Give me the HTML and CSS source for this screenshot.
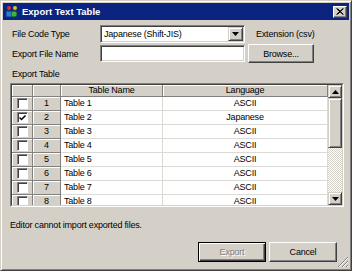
FILE: index.html
```html
<!DOCTYPE html>
<html lang="en">
<head>
    <meta charset="UTF-8">
    <title>Export Text Table</title>
    <link rel="stylesheet" href="styles.css">
</head>
<body>

    <div class="window">
        <div class="titlebar">
            <svg class="app-icon" width="14" height="14" viewBox="0 0 14 14">
                <rect x="1" y="6" width="6" height="6" fill="#2a7fd4" stroke="#0a3a7a" stroke-width="1"/>
                <circle cx="9" cy="9" r="3" fill="#3cb043" stroke="#1d6b22" stroke-width="1"/>
                <circle cx="4" cy="3" r="2" fill="#d83030"/>
                <circle cx="10" cy="3" r="2" fill="#e0c020"/>
                <path d="M4 5 L4 7 M10 5 L9 7" stroke="#444" stroke-width="1"/>
            </svg>
            <span class="title">Export Text Table</span>
            <span class="close-btn">
                <svg width="8" height="7" viewBox="0 0 8 7">
                    <path d="M0.5 0.5 L7 6.5 M1.5 0.5 L7.5 6.5 M7 0.5 L0.5 6.5 M7.5 0.5 L1.5 6.5" stroke="#000" stroke-width="1"/>
                </svg>
            </span>
        </div>

        <div class="body">
            <div class="form-row">
                <span class="field-label">File Code Type</span>
                <div class="combo">
                    <span class="combo-text">Japanese (Shift-JIS)</span>
                    <span class="combo-btn">
                        <svg width="7" height="4" viewBox="0 0 7 4"><path d="M0 0 H7 L3.5 4 Z" fill="#000"/></svg>
                    </span>
                </div>
                <span class="ext">Extension (csv)</span>
            </div>

            <div class="form-row row-file">
                <span class="field-label">Export File Name</span>
                <div class="textbox"></div>
                <button class="btn browse">Browse...</button>
            </div>

            <div class="section-label">Export Table</div>

            <div class="table">
                <div class="table-inner">
                    <div class="grid">
                        <div class="hcell"></div>
                        <div class="hcell"></div>
                        <div class="hcell">Table Name</div>
                        <div class="hcell">Language</div>

                        <div class="hcell"><span class="chk"></span></div>
                        <div class="hcell">1</div>
                        <div class="cell name">Table 1</div>
                        <div class="cell">ASCII</div>

                        <div class="hcell"><span class="chk"><svg width="7" height="6" viewBox="0 0 7 6"><path d="M0.5 2.5 L2.5 4.5 L6.5 0.5" stroke="#000" stroke-width="1.5" fill="none"/></svg></span></div>
                        <div class="hcell">2</div>
                        <div class="cell name">Table 2</div>
                        <div class="cell">Japanese</div>

                        <div class="hcell"><span class="chk"></span></div>
                        <div class="hcell">3</div>
                        <div class="cell name">Table 3</div>
                        <div class="cell">ASCII</div>

                        <div class="hcell"><span class="chk"></span></div>
                        <div class="hcell">4</div>
                        <div class="cell name">Table 4</div>
                        <div class="cell">ASCII</div>

                        <div class="hcell"><span class="chk"></span></div>
                        <div class="hcell">5</div>
                        <div class="cell name">Table 5</div>
                        <div class="cell">ASCII</div>

                        <div class="hcell"><span class="chk"></span></div>
                        <div class="hcell">6</div>
                        <div class="cell name">Table 6</div>
                        <div class="cell">ASCII</div>

                        <div class="hcell"><span class="chk"></span></div>
                        <div class="hcell">7</div>
                        <div class="cell name">Table 7</div>
                        <div class="cell">ASCII</div>

                        <div class="hcell"><span class="chk"></span></div>
                        <div class="hcell">8</div>
                        <div class="cell name">Table 8</div>
                        <div class="cell">ASCII</div>
                    </div>

                    <div class="vscroll">
                        <span class="sb-btn">
                            <svg width="7" height="4" viewBox="0 0 7 4"><path d="M0 4 H7 L3.5 0 Z" fill="#000"/></svg>
                        </span>
                        <span class="sb-thumb"></span>
                        <span class="sb-track"></span>
                        <span class="sb-btn">
                            <svg width="7" height="4" viewBox="0 0 7 4"><path d="M0 0 H7 L3.5 4 Z" fill="#000"/></svg>
                        </span>
                    </div>
                </div>
            </div>

            <p class="note">Editor cannot import exported files.</p>

            <div class="actions">
                <button class="btn default" disabled>Export</button>
                <button class="btn">Cancel</button>
            </div>
        </div>

        <!-- resize grip -->
        <svg class="grip" width="12" height="12" viewBox="0 0 12 12">
            <path d="M11 1 L1 11 M11 5 L5 11 M11 9 L9 11" stroke="#808080" stroke-width="1"/>
            <path d="M11 2 L2 11 M11 6 L6 11 M11 10 L10 11" stroke="#fff" stroke-width="1"/>
        </svg>
    </div>

</body>
</html>
```

FILE: styles.css
```css
body {
    margin: 0;
    font-family: "Liberation Sans", Arial, sans-serif;
    font-size: 9px;
    letter-spacing: -0.2px;
    color: #000;
}
.window {
    position: relative;
    width: 352px;
    height: 271px;
    box-sizing: border-box;
    background-color: #d4d0c8;
    border: 1px solid;
    border-color: #d4d0c8 #404040 #404040 #d4d0c8;
    box-shadow: inset 1px 1px #fff, inset -1px -1px #808080;
    padding: 2px;
    display: flex;
    flex-direction: column;
}
.titlebar {
    height: 17px;
    background-color: #0a2480;
    color: white;
    display: flex;
    align-items: center;
    padding: 0 2px;
}
.app-icon {
    margin-right: 3px;
}
.title {
    flex: 1;
    font-weight: bold;
    font-size: 9.5px;
    letter-spacing: 0;
}
.close-btn {
    width: 14px;
    height: 12px;
    box-sizing: border-box;
    background-color: #d4d0c8;
    border: 1px solid;
    border-color: #fff #404040 #404040 #fff;
    box-shadow: inset -1px -1px #808080;
    display: flex;
    align-items: center;
    justify-content: center;
}
.body {
    flex: 1;
    display: flex;
    flex-direction: column;
    padding: 5px 5px 0 7px;
}
.form-row {
    display: flex;
    align-items: center;
    height: 18px;
}
.field-label {
    width: 90px;
    padding-left: 2px;
    box-sizing: border-box;
}
/* sunken white boxes */
.combo,
.textbox {
    width: 145px;
    box-sizing: border-box;
    background-color: #fff;
    border: 1px solid;
    border-color: #808080 #fff #fff #808080;
    box-shadow: inset 1px 1px #404040, inset -1px -1px #d4d0c8;
}
.combo {
    height: 18px;
    display: flex;
    align-items: center;
    padding: 1px;
}
.combo-text {
    flex: 1;
    padding-left: 2px;
}
.combo-btn {
    width: 15px;
    height: 14px;
    box-sizing: border-box;
    background-color: #d4d0c8;
    border: 1px solid;
    border-color: #d4d0c8 #404040 #404040 #d4d0c8;
    box-shadow: inset 1px 1px #fff, inset -1px -1px #808080;
    display: flex;
    align-items: center;
    justify-content: center;
}
.ext {
    margin-left: 11px;
}
.row-file {
    margin-top: 1px;
    height: 19px;
}
.textbox {
    height: 17px;
}
.btn {
    font-family: inherit;
    font-size: 9px;
    letter-spacing: -0.2px;
    color: #000;
    height: 19px;
    padding: 0;
    background-color: #d4d0c8;
    border: 1px solid;
    border-color: #fff #404040 #404040 #fff;
    box-shadow: inset -1px -1px #808080, inset 1px 1px #d4d0c8;
}
.browse {
    margin-left: 3px;
    width: 66px;
}
.section-label {
    margin-top: 5px;
    line-height: 12px;
    padding-left: 2px;
}
.table {
    margin-top: 3px;
    height: 124px;
    box-sizing: border-box;
    border: 1px solid;
    border-color: #808080 #fff #fff #808080;
}
.table-inner {
    height: 100%;
    box-sizing: border-box;
    border: 1px solid;
    border-color: #404040 #d4d0c8 #d4d0c8 #404040;
    display: flex;
    background-color: #fff;
}
.grid {
    flex: 1;
    display: grid;
    grid-template-columns: 21px 28px 102px 1fr;
    grid-template-rows: 12px;
    grid-auto-rows: 14px;
    overflow: hidden;
    line-height: 13px;
}
.hcell,
.cell {
    box-sizing: border-box;
    text-align: center;
    display: flex;
    align-items: center;
    justify-content: center;
}
.hcell {
    background-color: #d4d0c8;
    border-right: 1px solid #808080;
    border-bottom: 1px solid #808080;
    box-shadow: inset 1px 1px #fff;
}
.cell {
    border-right: 1px solid #dcdad5;
    border-bottom: 1px solid #dcdad5;
}
.cell.name {
    justify-content: flex-start;
    padding-left: 3px;
}
.chk {
    width: 11px;
    height: 11px;
    box-sizing: border-box;
    background-color: #fff;
    border: 1px solid;
    border-color: #808080 #fff #fff #808080;
    box-shadow: inset 1px 1px #404040;
    display: flex;
    align-items: center;
    justify-content: center;
}
.vscroll {
    width: 14px;
    display: flex;
    flex-direction: column;
}
.sb-btn,
.sb-thumb {
    box-sizing: border-box;
    background-color: #d4d0c8;
    border: 1px solid;
    border-color: #d4d0c8 #404040 #404040 #d4d0c8;
    box-shadow: inset 1px 1px #fff, inset -1px -1px #808080;
}
.sb-btn {
    height: 13px;
    display: flex;
    align-items: center;
    justify-content: center;
}
.sb-thumb {
    height: 50px;
}
.sb-track {
    flex: 1;
    background: repeating-conic-gradient(#fff 0 25%, #d4d0c8 0 50%) 0 0 / 2px 2px;
}
.note {
    margin: 12px 0 0;
    line-height: 12px;
}
.actions {
    margin-top: 11px;
    display: flex;
    justify-content: flex-end;
    gap: 3px;
    padding-right: 7px;
}
.actions .btn {
    width: 68px;
    height: 20px;
}
.btn.default {
    border-color: #000;
    box-shadow: inset 1px 1px #fff, inset -1px -1px #404040, inset -2px -2px #808080;
    color: #808080;
    text-shadow: 1px 1px #fff;
}
.grip {
    position: absolute;
    right: 2px;
    bottom: 2px;
}
```
